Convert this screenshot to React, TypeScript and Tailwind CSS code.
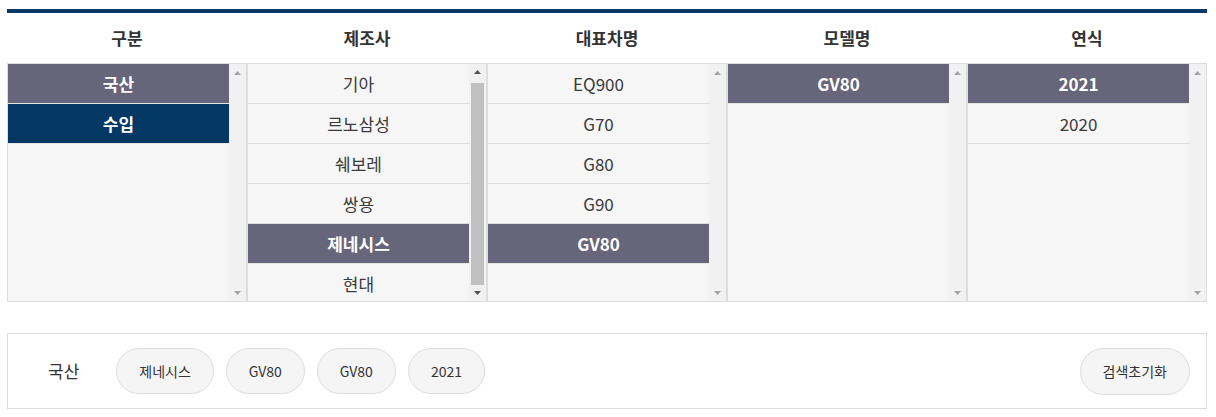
import React from "react"

type Col = { title: string; items: string[]; selected?: number; navy?: number; scroll?: boolean }

const cols: Col[] = [
  { title: "구분", items: ["국산", "수입"], selected: 0, navy: 1 },
  { title: "제조사", items: ["기아", "르노삼성", "쉐보레", "쌍용", "제네시스", "현대"], selected: 4, scroll: true },
  { title: "대표차명", items: ["EQ900", "G70", "G80", "G90", "GV80"], selected: 4 },
  { title: "모델명", items: ["GV80"], selected: 0 },
  { title: "연식", items: ["2021", "2020"], selected: 0 },
]

const chips = ["제네시스", "GV80", "GV80", "2021"]

function Arrow({ up, active }: { up?: boolean; active?: boolean }) {
  return (
    <svg width="7" height="4" viewBox="0 0 7 4" className={active ? "fill-[#505050]" : "fill-[#a3a3a3]"}>
      {up ? <path d="M0 4 L3.5 0 L7 4 Z" /> : <path d="M0 0 L7 0 L3.5 4 Z" />}
    </svg>
  )
}

function ListColumn({ col }: { col: Col }) {
  return (
    <div className="flex h-[239px] border border-[#dddddd] bg-[#f6f6f6]">
      <div className="flex-1 overflow-hidden">
        {col.items.map((it, i) => {
          const sel = i === col.selected
          const navy = i === col.navy
          return (
            <div
              key={i}
              className={
                "flex h-10 items-center justify-center border-b text-[17px] " +
                (sel
                  ? "border-[#e6e6e6] bg-[#67657a] font-bold text-white"
                  : navy
                    ? "border-[#e6e6e6] bg-[#033764] font-bold text-white"
                    : "border-[#dddddd] text-[#3a3a3a]")
              }
            >
              {it}
            </div>
          )
        })}
      </div>
      <div className="flex w-[17px] flex-col bg-[#f1f1f1]">
        <div className="flex h-[17px] items-center justify-center">
          <Arrow up active={col.scroll} />
        </div>
        <div className="flex-1 px-[2px] pt-[2px]">
          {col.scroll && <div className="h-[202px] bg-[#c1c1c1]" />}
        </div>
        <div className="flex h-[17px] items-center justify-center">
          <Arrow active={col.scroll} />
        </div>
      </div>
    </div>
  )
}

export default function App() {
  return (
    <div
      className="h-[417px] w-[1216px] bg-white px-[7px] pt-[9px] text-[#333333]"
      style={{ fontFamily: '"Noto Sans CJK KR", "Noto Sans", sans-serif' }}
    >
      <div className="w-[1200px]">
        <div className="h-1 bg-[#073764]" />
        <div className="grid grid-cols-5">
          {cols.map((c) => (
            <div key={c.title} className="flex flex-col">
              <div className="flex h-[50px] items-center justify-center text-[17px] font-bold text-[#333333]">
                {c.title}
              </div>
              <ListColumn col={c} />
            </div>
          ))}
        </div>
        <div className="mt-[31px] flex h-[76px] items-center border border-[#dddddd] pl-10 pr-4">
          <span className="mr-[37px] text-[17px] text-[#333333]">국산</span>
          <div className="flex items-center gap-3">
            {chips.map((c, i) => (
              <span
                key={i}
                className="flex h-[46px] items-center rounded-full border border-[#dddddd] bg-[#f5f5f5] px-[22px] text-[14px] text-[#333333]"
              >
                {c}
              </span>
            ))}
          </div>
          <button
            type="button"
            className="ml-auto flex h-[47px] items-center rounded-full border border-[#dddddd] bg-[#f5f5f5] px-[22px] text-[14px] text-[#333333]"
          >
            검색초기화
          </button>
        </div>
      </div>
    </div>
  )
}
